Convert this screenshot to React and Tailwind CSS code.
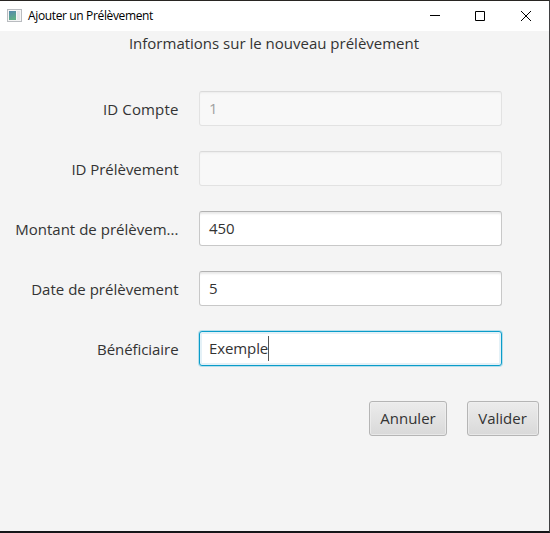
import React from 'react';

const fields = [
  { label: 'ID Compte', value: '1', disabled: true, spacing: 'tracking-[0.15px]' },
  { label: 'ID Prélèvement', value: '', disabled: true, spacing: 'tracking-[-0.03px]' },
  { label: 'Montant de prélèvem...', value: '450', spacing: 'tracking-[0.02px]' },
  { label: 'Date de prélèvement', value: '5', spacing: 'tracking-[0.01px]' },
  { label: 'Bénéficiaire', value: 'Exemple', focused: true, spacing: 'tracking-[-0.06px]' },
];

const boxStyles = {
  disabled: 'border-[#e2e2e2] border-t-[#dadada] bg-[#f8f8f8] text-[#a0a0a0] shadow-[inset_0_2px_2px_-1px_#ececec]',
  normal: 'border-[#c8c8c8] border-t-[#b2b2b2] bg-white text-[#333] shadow-[inset_0_3px_2px_-1px_#e9e9e9]',
  focused: 'border-[#0a9cc9] bg-white text-[#333] shadow-[0_0_0_1px_#b5dfec,inset_0_0_0_2px_#e4f1f7]',
};

function Field({ label, value, disabled, focused, spacing }) {
  const state = disabled ? 'disabled' : focused ? 'focused' : 'normal';
  return (
    <div className="flex h-[35px] items-center gap-5">
      <label className={`w-[179px] whitespace-nowrap pr-[0.5px] text-right ${spacing}`}>{label}</label>
      <div className={`flex h-[35px] w-[303px] items-center rounded-[3px] border pb-px pl-[9px] tracking-[-0.1px] ${boxStyles[state]}`}>
        <span>{value}</span>
        {focused && <span className="h-[25px] w-px bg-[#555]" />}
      </div>
    </div>
  );
}

function Button({ children, className }) {
  return (
    <button
      className={`flex h-[35px] items-center justify-center rounded-[3px] border border-[#b5b5b5] bg-linear-to-b from-[#ececec] to-[#d9d9d9] pb-0.5 shadow-[inset_0_0_0_1px_#f1f1f199] ${className}`}
    >
      {children}
    </button>
  );
}

export default function App() {
  return (
    <div className="flex h-[533px] w-[550px] flex-col overflow-hidden border-t border-r border-b-2 border-t-[#282522] border-r-[#3f4042] border-b-[#151619] bg-[#f4f4f4] font-['Open_Sans','Noto_Sans',sans-serif] text-[15px] leading-5 text-[#333]">
      <header className="flex h-[30px] shrink-0 items-center bg-white pl-[7px] text-black">
        <svg className="-mt-px" width="15" height="13" viewBox="0 0 15 13" shapeRendering="crispEdges">
          <defs>
            <linearGradient id="pane" x1="0" y1="0" x2="0.3" y2="1">
              <stop offset="0" stopColor="#5387ad" />
              <stop offset="1" stopColor="#5eae86" />
            </linearGradient>
          </defs>
          <rect x="0.5" y="0.5" width="14" height="12" fill="#f5f5f5" stroke="#b9bcc0" />
          <rect x="2" y="2" width="7" height="9" fill="url(#pane)" />
          <rect x="10" y="2" width="3" height="9" fill="#e4e6e8" />
        </svg>
        <span className="ml-1.5 whitespace-nowrap text-[12px] leading-4 tracking-[-0.36px]">Ajouter un Prélèvement</span>
        <svg className="ml-auto mr-[13px]" width="106" height="12" viewBox="0 0 106 12" fill="none" stroke="#000">
          <path d="M0 5.5H10" />
          <path d="M45.5 1.5H54.5V10.5H45.5Z" />
          <path d="M91 1L101 11M101 1L91 11" />
        </svg>
      </header>
      <h1 className="mt-[2px] whitespace-nowrap pr-px text-center text-[15px] leading-5">Informations sur le nouveau prélèvement</h1>
      <form className="mt-[38px] flex flex-col gap-[25px]">
        {fields.map((f) => (
          <Field key={f.label} {...f} />
        ))}
      </form>
      <div className="mt-[35px] flex justify-end gap-5 pr-[10px]">
        <Button className="w-[78px]">Annuler</Button>
        <Button className="w-[72px] pr-px">Valider</Button>
      </div>
    </div>
  );
}
